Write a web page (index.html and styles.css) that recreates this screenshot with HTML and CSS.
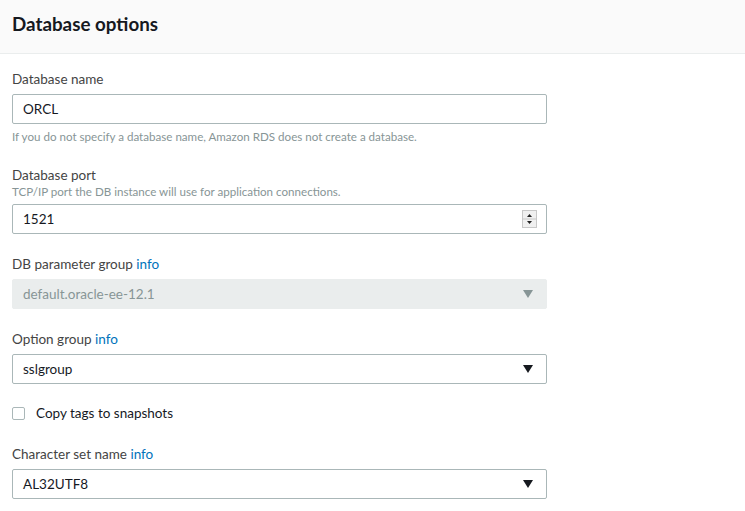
FILE: index.html
```html
<!DOCTYPE html>
<html>
<head>
<meta charset="utf-8">
<link rel="stylesheet" href="styles.css">
</head>
<body>
<div class="panel">
  <div class="panel-header"><h2 class="title">Database options</h2></div>
  <div class="panel-body">
    <div class="field">
      <div class="label">Database name</div>
      <div class="input"><span class="value">ORCL</span></div>
      <div class="hint">If you do not specify a database name, Amazon RDS does not create a database.</div>
    </div>
    <div class="field">
      <div class="label">Database port</div>
      <div class="hint hint-top">TCP/IP port the DB instance will use for application connections.</div>
      <div class="input">
        <span class="value">1521</span>
        <svg class="spinner" width="15" height="18" viewBox="0 0 15 18">
          <rect x="0.5" y="0.5" width="14" height="17" fill="#f0f0f0" stroke="#c8c8c8"/>
          <line x1="1" y1="9" x2="14" y2="9" stroke="#c8c8c8"/>
          <path d="M5 7 L7.5 4 L10 7 Z" fill="#222"/>
          <path d="M5 11 L10 11 L7.5 14 Z" fill="#222"/>
        </svg>
      </div>
    </div>
    <div class="field">
      <div class="label">DB parameter group <a class="info">info</a></div>
      <div class="input select disabled">
        <span class="value">default.oracle-ee-12.1</span>
        <span class="arrow"></span>
      </div>
    </div>
    <div class="field">
      <div class="label">Option group <a class="info">info</a></div>
      <div class="input select">
        <span class="value">sslgroup</span>
        <span class="arrow"></span>
      </div>
    </div>
    <div class="field checkbox-row">
      <span class="checkbox"></span>
      <span class="check-label">Copy tags to snapshots</span>
    </div>
    <div class="field">
      <div class="label">Character set name <a class="info">info</a></div>
      <div class="input select">
        <span class="value">AL32UTF8</span>
        <span class="arrow"></span>
      </div>
    </div>
  </div>
</div>
</body>
</html>
```
FILE: styles.css
```css
html, body {
  margin: 0;
  padding: 0;
  background: #ffffff;
  font-family: "Lato", "Open Sans", sans-serif;
  color: #16191f;
}
.panel {
  width: 745px;
}
.panel-header {
  background: #fafafa;
  border-bottom: 1px solid #eaeded;
  height: 54px;
  display: flex;
  align-items: center;
  padding: 0 12px;
  box-sizing: border-box;
}
.title {
  margin: 0;
  font-size: 18.8px;
  font-weight: 700;
  color: #16191f;
  line-height: 24px;
  position: relative;
  top: -3px;
}
.panel-body {
  padding: 15px 12px 0 12px;
  display: flex;
  flex-direction: column;
  gap: 20px;
}
.field {
  display: flex;
  flex-direction: column;
  width: 535px;
}
.label {
  font-size: 13.5px;
  line-height: 20px;
  color: #444444;
  margin-bottom: 5px;
}
.info {
  color: #0073bb;
  text-decoration: none;
}
.hint {
  font-size: 11.6px;
  line-height: 16px;
  color: #879596;
  margin-top: 5px;
}
.hint-top {
  margin-top: -6px;
  margin-bottom: 4px;
}
.input {
  height: 30px;
  box-sizing: border-box;
  border: 1px solid #aab7b8;
  border-radius: 2px;
  display: flex;
  align-items: center;
  justify-content: space-between;
  padding: 0 12px 0 10px;
  font-size: 13.5px;
  color: #16191f;
}
.input .value {
  line-height: 20px;
}
.spinner {
  margin-right: -3px;
}
.select .arrow {
  width: 0;
  height: 0;
  border-left: 5px solid transparent;
  border-right: 5px solid transparent;
  border-top: 8px solid #16191f;
  margin-right: 1px;
}
.disabled {
  background: #eaeded;
  border-color: #eaeded;
}
.disabled .value {
  color: #879596;
}
.disabled .arrow {
  border-top-color: #879596;
}
.checkbox-row {
  flex-direction: row;
  align-items: center;
  height: 20px;
  margin-top: -1px;
  margin-bottom: 1px;
}
.checkbox {
  width: 13px;
  height: 13px;
  box-sizing: border-box;
  border: 1px solid #aab7b8;
  border-radius: 2px;
  background: #fff;
  margin-right: 11px;
}
.check-label {
  font-size: 13.5px;
  line-height: 20px;
  color: #16191f;
}
```
